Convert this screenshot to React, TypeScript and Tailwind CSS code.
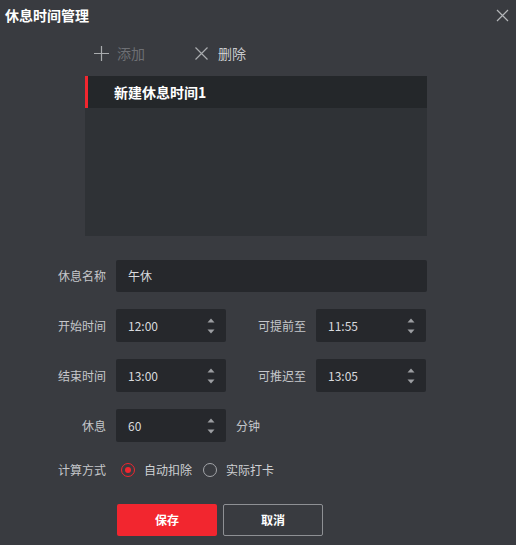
import { useState } from 'react'

const font = "font-['Noto_Sans_CJK_SC','Microsoft_YaHei',sans-serif]"

function Spinner({ value, className = 'w-[110px]' }: { value: string; className?: string }) {
  return (
    <div className={`relative flex h-[33px] items-center rounded-[2px] bg-[#26282c] pl-[12px] text-[12px] text-[#d8dade] ${className}`}>
      <span>{value}</span>
      {/* up / down steppers */}
      <div className="absolute right-[11px] top-0 flex h-full flex-col items-center justify-center gap-[6px]">
        <svg width="8" height="5" viewBox="0 0 8 5">
          <path d="M4 0.5 L7.5 4.5 L0.5 4.5 Z" fill="#9c9ea2" />
        </svg>
        <svg width="8" height="5" viewBox="0 0 8 5">
          <path d="M0.5 0.5 L7.5 0.5 L4 4.5 Z" fill="#9c9ea2" />
        </svg>
      </div>
    </div>
  )
}

function Label({ text, width = 'w-[106px]' }: { text: string; width?: string }) {
  return <div className={`${width} shrink-0 text-right text-[12px] text-[#c5c7cb]`}>{text}</div>
}

function Radio({ checked, label, onClick }: { checked: boolean; label: string; onClick: () => void }) {
  return (
    <button className="flex items-center gap-[9px]" onClick={onClick}>
      <span
        className={`flex h-[14px] w-[14px] items-center justify-center rounded-full border ${
          checked ? 'border-[#f2262f]' : 'border-[#a3a5a9]'
        }`}
      >
        {checked && <span className="h-[6px] w-[6px] rounded-full bg-[#f2262f]" />}
      </span>
      <span className="text-[12px] text-[#cfd1d4]">{label}</span>
    </button>
  )
}

export default function App() {
  const [mode, setMode] = useState<'auto' | 'real'>('auto')

  return (
    <div className={`h-[545px] w-[516px] overflow-hidden bg-[#393b40] ${font}`}>
      {/* header */}
      <div className="flex h-[30px] items-center justify-between pl-[5px] pr-[7px]">
        <span className="text-[14px] font-bold text-white">休息时间管理</span>
        <svg width="13" height="13" viewBox="0 0 13 13">
          <path d="M1 1 L12 12 M12 1 L1 12" stroke="#b3b5b8" strokeWidth="1.2" />
        </svg>
      </div>

      {/* toolbar */}
      <div className="flex h-[46px] items-center pl-[94px]">
        <button className="flex items-center gap-[8px] text-[14px] text-[#6d6f74]">
          <svg width="15" height="15" viewBox="0 0 15 15">
            <path d="M7.5 0 V15 M0 7.5 H15" stroke="#a9abae" strokeWidth="1.2" />
          </svg>
          添加
        </button>
        <button className="ml-[50px] flex items-center gap-[10px] text-[14px] text-[#c9cbce]">
          <svg width="13" height="13" viewBox="0 0 13 13">
            <path d="M0.5 0.5 L12.5 12.5 M12.5 0.5 L0.5 12.5" stroke="#a9abae" strokeWidth="1.2" />
          </svg>
          删除
        </button>
      </div>

      {/* break list */}
      <div className="ml-[85px] h-[160px] w-[342px] bg-[#2f3236]">
        <div className="flex h-[32px] items-center border-l-[3px] border-[#f2262f] bg-[#24272a] pl-[26px] text-[14px] font-bold text-white">
          新建休息时间1
        </div>
      </div>

      {/* form */}
      <div className="mt-[24px] flex flex-col">
        <div className="flex items-center">
          <Label text="休息名称" />
          <div className="ml-[10px] flex h-[32px] w-[311px] items-center rounded-[2px] bg-[#26282c] pl-[12px] text-[12px] text-[#d8dade]">
            午休
          </div>
        </div>

        <div className="mt-[17px] flex items-center">
          <Label text="开始时间" />
          <Spinner value="12:00" className="ml-[10px] w-[110px]" />
          <Label text="可提前至" width="w-[80px]" />
          <Spinner value="11:55" className="ml-[10px] w-[110px]" />
        </div>

        <div className="mt-[17px] flex items-center">
          <Label text="结束时间" />
          <Spinner value="13:00" className="ml-[10px] w-[110px]" />
          <Label text="可推迟至" width="w-[80px]" />
          <Spinner value="13:05" className="ml-[10px] w-[110px]" />
        </div>

        <div className="mt-[17px] flex items-center">
          <Label text="休息" />
          <Spinner value="60" className="ml-[10px] w-[110px]" />
          <span className="ml-[10px] text-[12px] text-[#c5c7cb]">分钟</span>
        </div>

        <div className="mt-[20px] flex h-[16px] items-center">
          <Label text="计算方式" />
          <div className="ml-[15px] flex items-center gap-[11px]">
            <Radio checked={mode === 'auto'} label="自动扣除" onClick={() => setMode('auto')} />
            <Radio checked={mode === 'real'} label="实际打卡" onClick={() => setMode('real')} />
          </div>
        </div>

        <div className="mt-[26px] flex gap-[6px] pl-[117px]">
          <button className="h-[32px] w-[100px] rounded-[2px] bg-[#f2262f] text-[12px] font-bold text-white">
            保存
          </button>
          <button className="h-[32px] w-[100px] rounded-[2px] border border-[#8e9094] text-[12px] font-bold text-white">
            取消
          </button>
        </div>
      </div>
    </div>
  )
}
